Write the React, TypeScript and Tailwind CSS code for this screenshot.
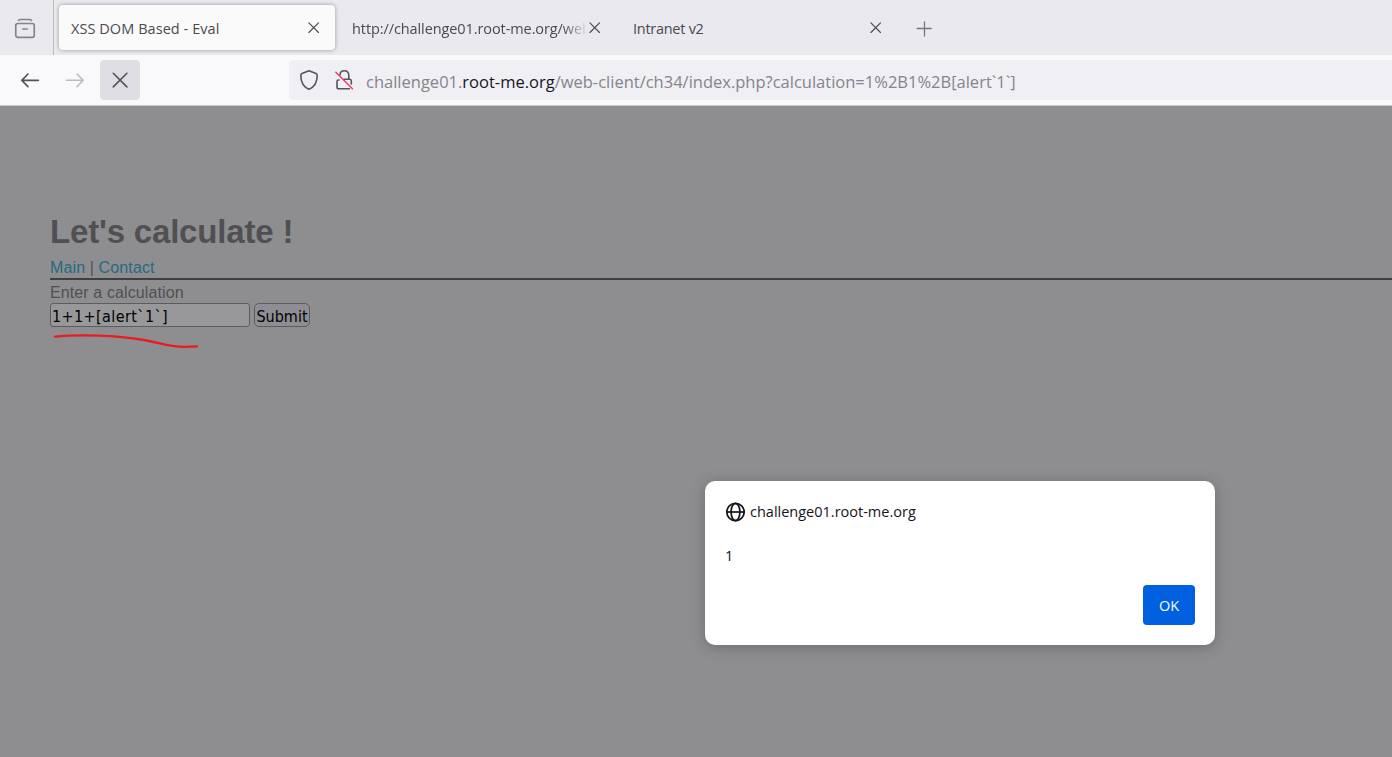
import React from 'react';

const UI = "font-['Open_Sans','Noto_Sans',sans-serif]";

function Cross({ className }: { className: string }) {
  return (
    <svg viewBox="0 0 12 12" className={className} fill="none" stroke="currentColor" strokeWidth="1.15" strokeLinecap="round">
      <path d="M0.9 0.9l9.6 9.6M10.5 0.9L0.9 10.5" />
    </svg>
  );
}

function TabStrip() {
  return (
    <div className="flex h-[55px] shrink-0 bg-[#eae9ee] text-[14.5px] leading-[20px] text-[#4a4a50]">
      <div className="flex w-[54px] shrink-0 border-r border-[#bcbbc2] pt-[18px] pl-[14px] text-[#85848c]">
        <svg viewBox="0 0 22 22" className="h-[22px] w-[22px]" fill="none" stroke="currentColor" strokeWidth="1.7" strokeLinecap="round">
          <path d="M4.5 2.5Q4.8 1.5 6.2 1.5H15.8Q17.2 1.5 17.5 2.5" />
          <rect x="1.75" y="5.5" width="18.5" height="13.8" rx="2" />
          <path d="M8.8 11h4.4" />
        </svg>
      </div>
      <div className="mt-[5px] ml-[5px] flex h-[45px] w-[276px] shrink-0 rounded-[4px] bg-[#fafafb] pt-[14px] pl-[12px] shadow-[0_0_4px_rgba(0,0,0,0.35)]">
        <span className="w-[237px] tracking-[0.06px] whitespace-nowrap">XSS DOM Based - Eval</span>
        <Cross className="mt-[3px] h-[12px] w-[12px]" />
      </div>
      <div className="flex w-[281px] shrink-0 pt-[19px] pl-[17px]">
        <span className="w-[234px] overflow-hidden tracking-[-0.09px] whitespace-nowrap [mask-image:linear-gradient(to_right,black_211px,transparent_236px)]">
          http://challenge01.root-me.org/web
        </span>
        <Cross className="mt-[3px] ml-[3px] h-[12px] w-[12px] shrink-0" />
      </div>
      <div className="flex w-[266px] shrink-0 pt-[19px] pl-[17px]">
        <span className="w-[238px] tracking-[-0.27px]">Intranet v2</span>
        <Cross className="mt-[3px] h-[12px] w-[12px] shrink-0" />
      </div>
      <svg viewBox="0 0 16 16" className="mt-[21px] ml-[34px] h-[16px] w-[16px]" fill="none" stroke="#77767e" strokeWidth="1.3" strokeLinecap="round">
        <path d="M8.5 1v14M1.2 7.5h14" />
      </svg>
    </div>
  );
}

function Toolbar() {
  return (
    <div className="flex h-[51px] shrink-0 border-b border-[#c6c6c9] bg-[#f9f9fb] pt-[5px] text-[#55545c]">
      <div className="flex h-[40px] w-[289px] shrink-0 items-center">
        <svg viewBox="0 0 20 16" className="ml-[20px] h-[16px] w-[20px]" fill="none" stroke="currentColor" strokeWidth="1.7" strokeLinecap="round" strokeLinejoin="round">
          <path d="M8 2L1.8 8.3L8 14.6M1.8 8.3H18.3" />
        </svg>
        <svg viewBox="0 0 20 16" className="ml-[25px] h-[16px] w-[20px]" fill="none" stroke="#bbbbc0" strokeWidth="1.6" strokeLinecap="round" strokeLinejoin="round">
          <path d="M12 2L18.2 8.3L12 14.6M18.2 8.3H1.5" />
        </svg>
        <div className="ml-[15px] flex h-[40px] w-[40px] items-center justify-center rounded-[4px] bg-[#dddde3]">
          <Cross className="h-[17px] w-[17px]" />
        </div>
      </div>
      <div className="flex h-[40px] grow rounded-l-[5px] bg-[#f0eff4]">
        <svg viewBox="0 0 20 22" className="mt-[9px] ml-[10px] h-[22px] w-[20px] shrink-0" fill="none" stroke="currentColor" strokeWidth="1.6" strokeLinejoin="round">
          <path d="M10 1.8L17 4.6Q18.2 5.1 18.2 6.4C18.2 13 15.6 17.8 10 20.2C4.4 17.8 1.8 13 1.8 6.4Q1.8 5.1 3 4.6Z" />
        </svg>
        <svg viewBox="0 0 20 22" className="mt-[9px] ml-[15px] h-[22px] w-[20px] shrink-0" fill="none" stroke="currentColor" strokeWidth="1.6" strokeLinecap="round">
          <path d="M5 11H4.5Q3 11 3 12.5V18Q3 19.8 4.8 19.8H15.5M10 10.3H15.8Q17.3 10.3 17.3 12V15M6 6Q6.2 1.8 10.3 1.8Q14.8 1.8 14.8 6.5V10" />
          <path d="M1.8 3.2L18.5 19.8" stroke="#f33b68" strokeWidth="1.5" />
        </svg>
        <span className="mt-[10px] ml-[12px] text-[16.5px] leading-[24px] whitespace-nowrap text-[#85848a]">
          challenge01.<span className="text-[#18171e]">root-me.org</span>/web-client/ch34/index.php?calculation=1%2B1%2B[alert`1`]
        </span>
      </div>
    </div>
  );
}

function AlertDialog() {
  return (
    <div className="absolute top-[375px] left-[705px] flex h-[164px] w-[510px] flex-col rounded-[10px] bg-white px-[20px] pt-[20px] text-[14.5px] leading-[20px] text-[#15141a] shadow-[0_2px_14px_rgba(58,57,68,0.4)]">
      <div className="flex h-[20px] items-center font-medium">
        <svg viewBox="0 0 20 20" className="mt-[1px] h-[20px] w-[20px]" fill="none" stroke="currentColor" strokeWidth="1.7">
          <circle cx="10.5" cy="10" r="8.7" />
          <ellipse cx="10.5" cy="10" rx="4.4" ry="8.7" />
          <path d="M1.8 10h17.4" />
        </svg>
        <span className="mt-[2px] ml-[5px]">challenge01.root-me.org</span>
      </div>
      <p className="mt-[25px]">1</p>
      <button className="mt-[19px] h-[40px] w-[52px] self-end rounded-[4px] bg-[#0061e0] pt-[2px] text-[14.5px] tracking-[-0.2px] text-[#fbfbfe]">OK</button>
    </div>
  );
}

function Page() {
  return (
    <main className="relative grow bg-[#8e8e90] pt-[104px] pl-[50px] font-['Liberation_Sans',sans-serif] text-[16px] leading-[20px] text-[#505053]">
      <h1 className="h-[48px] text-[33px] leading-[43px] font-bold tracking-[-0.18px] whitespace-nowrap">Let's calculate !</h1>
      <nav className="h-[22px] border-b-2 border-[#3f3f42] tracking-[0.12px] text-[#236a82]">
        <a>Main</a> <span className="text-[#505053]">|</span> <a>Contact</a>
      </nav>
      <p className="mt-[3px] h-[20px] tracking-[0.11px]">Enter a calculation</p>
      <div className="flex gap-[4px] font-['DejaVu_Sans_Condensed','DejaVu_Sans',sans-serif] text-[16px] text-black">
        <div className="flex h-[24px] w-[200px] items-center rounded-[3px] border border-[#5c5b66] bg-[#98989a] pt-[4px] pl-[1px] tracking-[0.4px] whitespace-nowrap">1+1+[alert`1`]</div>
        <button className="flex h-[24px] w-[56px] items-center justify-center rounded-[5px] border border-[#5c5b66] bg-[#8d8d93] pt-[4px]">Submit</button>
      </div>
      <svg viewBox="0 0 150 20" className="absolute top-[226px] left-[50px] h-[20px] w-[150px]" fill="none" stroke="#e81c20" strokeWidth="2.3" strokeLinecap="round">
        <path d="M5 4.7C30 2 66 3.5 94 8C112 11 117 15 135 14.8L147 14.4" />
      </svg>
      <div className={UI}>
        <AlertDialog />
      </div>
    </main>
  );
}

export default function App() {
  return (
    <div className="flex h-[757px] w-[1392px] flex-col overflow-hidden font-['Open_Sans','Noto_Sans',sans-serif]">
      <TabStrip />
      <Toolbar />
      <Page />
    </div>
  );
}
